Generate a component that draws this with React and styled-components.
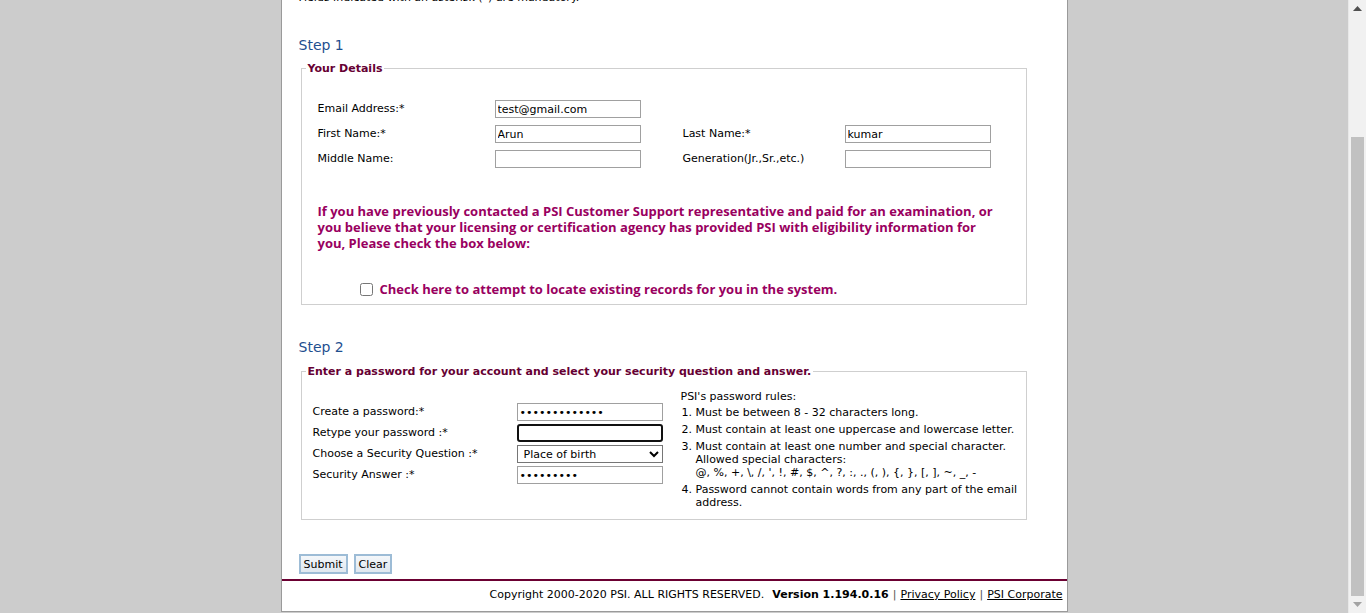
import React from "react";
import styled, { createGlobalStyle } from "styled-components";

const GlobalStyle = createGlobalStyle`
  html, body {
    margin: 0;
    padding: 0;
    height: 613px;
    overflow: hidden;
    background: #cccccc;
  }
  body {
    font-family: "DejaVu Sans", Verdana, sans-serif;
    font-size: 11px;
    color: #000;
  }
`;

const Screen = styled.div`
  display: flex;
  height: 613px;
  overflow: hidden;
`;

const Viewport = styled.div`
  flex: 1;
  display: flex;
  justify-content: center;
  align-items: flex-start;
  background: #cccccc;
`;

const Page = styled.div`
  width: 785px;
  margin-top: -9px;
  background: #fff;
  border-left: 1px solid #9a9a9a;
  border-right: 1px solid #9a9a9a;
  border-bottom: 1px solid #9a9a9a;
`;

const Content = styled.div`
  padding: 0 17px 5px 17px;
`;

const Note = styled.p`
  margin: 0;
  line-height: 14px;
`;

const StepTitle = styled.h2`
  margin: ${(p) => p.$top}px 0 ${(p) => p.$bottom}px 0;
  font-size: 14px;
  font-weight: normal;
  color: #1f4f8f;
  line-height: 16px;
`;

const Fieldset = styled.fieldset`
  margin: 0 23px 0 2px;
  padding: ${(p) => p.$pad};
  border: 1px solid #cfcfcf;
  min-width: 0;
`;

const Legend = styled.legend`
  padding: 0 2px;
  margin-left: ${(p) => p.$shift}px;
  font-weight: bold;
  font-size: 11px;
  color: #660033;
`;

const DetailsGrid = styled.div`
  display: grid;
  grid-template-columns: 177px 146px 42px 162px 146px;
  row-gap: 7px;
  align-items: center;
`;

const Label = styled.label`
  line-height: 18px;
  white-space: nowrap;
`;

const Input = styled.input`
  box-sizing: border-box;
  width: 146px;
  height: 18px;
  margin: 0;
  padding: 0 2px;
  border: 1px solid #a0a0a0;
  font-family: "DejaVu Sans", Verdana, sans-serif;
  font-size: 11px;
  color: #000;
  background: #fff;
  outline: none;
  ${(p) =>
    p.$focused &&
    `
    border: 2px solid #101010;
    border-radius: 3px;
  `}
`;

const Notice = styled.p`
  max-width: 684px;
  margin: 35px 0 0 0;
  font-family: "Open Sans", sans-serif;
  font-weight: bold;
  font-size: 13px;
  line-height: 16px;
  color: #99005f;
`;

const CheckRow = styled.label`
  display: flex;
  align-items: center;
  gap: 7px;
  margin: 29px 0 0 42px;
  font-family: "Open Sans", sans-serif;
  font-weight: bold;
  font-size: 13px;
  color: #99005f;
`;

const Checkbox = styled.input`
  margin: 0;
  width: 13px;
  height: 13px;
`;

const PasswordLayout = styled.div`
  display: flex;
  gap: 18px;
`;

const PasswordGrid = styled.div`
  display: grid;
  grid-template-columns: 204px 146px;
  row-gap: 3px;
  align-content: start;
  padding-top: 15px;
`;

const Select = styled.select`
  box-sizing: border-box;
  width: 146px;
  height: 18px;
  margin: 0;
  padding: 0 0 0 2px;
  border: 1px solid #767676;
  font-family: "DejaVu Sans", Verdana, sans-serif;
  font-size: 11px;
  color: #000;
  background: #fff;
`;

const Rules = styled.div`
  padding-top: 2px;
  line-height: 13px;
`;

const RuleTitle = styled.div`
  margin-bottom: 3px;
`;

const RuleList = styled.ol`
  margin: 0;
  padding: 0 0 0 15px;
`;

const RuleItem = styled.li`
  margin-bottom: 4px;
`;

const Buttons = styled.div`
  display: flex;
  gap: 6px;
  margin-top: 34px;
`;

const Button = styled.button`
  height: 20px;
  padding: 0 3px;
  border: 2px solid #9dbcd6;
  background: linear-gradient(#f4f7fa, #dfe7ef);
  font-family: "DejaVu Sans", Verdana, sans-serif;
  font-size: 11px;
  color: #000;
`;

const Footer = styled.div`
  border-top: 2px solid #6b0032;
  display: flex;
  justify-content: flex-end;
  align-items: flex-start;
  gap: 4px;
  height: 32px;
  box-sizing: border-box;
  padding: 7px 4px 0 0;
`;

const Strong = styled.b`
  margin-left: 4px;
`;

const FooterLink = styled.a`
  color: #000;
  text-decoration: underline;
`;

const Pipe = styled.span`
  color: #555;
`;

const Scrollbar = styled.div`
  width: 17px;
  display: flex;
  flex-direction: column;
  align-items: center;
  background: #f1f1f1;
  border-left: 1px solid #e8e8e8;
`;

const Arrow = styled.div`
  height: 17px;
  display: flex;
  align-items: center;
  justify-content: center;
`;

const Track = styled.div`
  flex: 1;
  width: 100%;
  display: flex;
  flex-direction: column;
  padding: 0 2px;
  box-sizing: border-box;
`;

const Thumb = styled.div`
  margin-top: 120px;
  flex: 1;
  background: #c1c1c1;
`;

const Up = () => (
  <svg width="9" height="5" viewBox="0 0 9 5">
    <path d="M0 5 L4.5 0 L9 5 Z" fill="#505050" />
  </svg>
);

const Down = () => (
  <svg width="9" height="5" viewBox="0 0 9 5">
    <path d="M0 0 L4.5 5 L9 0 Z" fill="#a3a3a3" />
  </svg>
);

export default function App() {
  return (
    <>
      <GlobalStyle />
      <Screen>
        <Viewport>
          <Page>
            <Content>
              <Note>Fields indicated with an asterisk (*) are mandatory.</Note>

              <StepTitle $top={32} $bottom={9}>Step 1</StepTitle>
              <Fieldset $pad="25px 16px 6px 16px">
                <Legend $shift={-12}>Your Details</Legend>
                <DetailsGrid>
                  <Label>Email Address:*</Label>
                  <Input defaultValue="test@gmail.com" />
                  <span />
                  <span />
                  <span />

                  <Label>First Name:*</Label>
                  <Input defaultValue="Arun" />
                  <span />
                  <Label>Last Name:*</Label>
                  <Input defaultValue="kumar" />

                  <Label>Middle Name:</Label>
                  <Input />
                  <span />
                  <Label>Generation(Jr.,Sr.,etc.)</Label>
                  <Input />
                </DetailsGrid>

                <Notice>
                  If you have previously contacted a PSI Customer Support representative and paid for an examination, or
                  you believe that your licensing or certification agency has provided PSI with eligibility information for
                  you, Please check the box below:
                </Notice>
                <CheckRow>
                  <Checkbox type="checkbox" />
                  Check here to attempt to locate existing records for you in the system.
                </CheckRow>
              </Fieldset>

              <StepTitle $top={34} $bottom={10}>Step 2</StepTitle>
              <Fieldset $pad="10px 2px 6px 11px">
                <Legend $shift={-7}>Enter a password for your account and select your security question and answer.</Legend>
                <PasswordLayout>
                  <PasswordGrid>
                    <Label>Create a password:*</Label>
                    <Input type="password" defaultValue="Password@1234" />
                    <Label>Retype your password :*</Label>
                    <Input type="password" $focused />
                    <Label>Choose a Security Question :*</Label>
                    <Select defaultValue="birth">
                      <option value="birth">Place of birth</option>
                      <option value="pet">Name of first pet</option>
                    </Select>
                    <Label>Security Answer :*</Label>
                    <Input type="password" defaultValue="Chennai12" />
                  </PasswordGrid>
                  <Rules>
                    <RuleTitle>PSI's password rules:</RuleTitle>
                    <RuleList>
                      <RuleItem>Must be between 8 - 32 characters long.</RuleItem>
                      <RuleItem>Must contain at least one uppercase and lowercase letter.</RuleItem>
                      <RuleItem>
                        Must contain at least one number and special character.
                        <br />
                        Allowed special characters:
                        <br />
                        @, %, +, \, /, ', !, #, $, ^, ?, :, ., (, ), {"{"}, {"}"}, [, ], ~, _, -
                      </RuleItem>
                      <RuleItem>Password cannot contain words from any part of the email address.</RuleItem>
                    </RuleList>
                  </Rules>
                </PasswordLayout>
              </Fieldset>

              <Buttons>
                <Button type="button">Submit</Button>
                <Button type="button">Clear</Button>
              </Buttons>
            </Content>
            <Footer>
              <span>Copyright 2000-2020 PSI. ALL RIGHTS RESERVED.</span>
              <Strong>Version 1.194.0.16</Strong>
              <Pipe>|</Pipe>
              <FooterLink href="#">Privacy Policy</FooterLink>
              <Pipe>|</Pipe>
              <FooterLink href="#">PSI Corporate</FooterLink>
            </Footer>
          </Page>
        </Viewport>
        <Scrollbar>
          <Arrow>
            <Up />
          </Arrow>
          <Track>
            <Thumb />
          </Track>
          <Arrow>
            <Down />
          </Arrow>
        </Scrollbar>
      </Screen>
    </>
  );
}
